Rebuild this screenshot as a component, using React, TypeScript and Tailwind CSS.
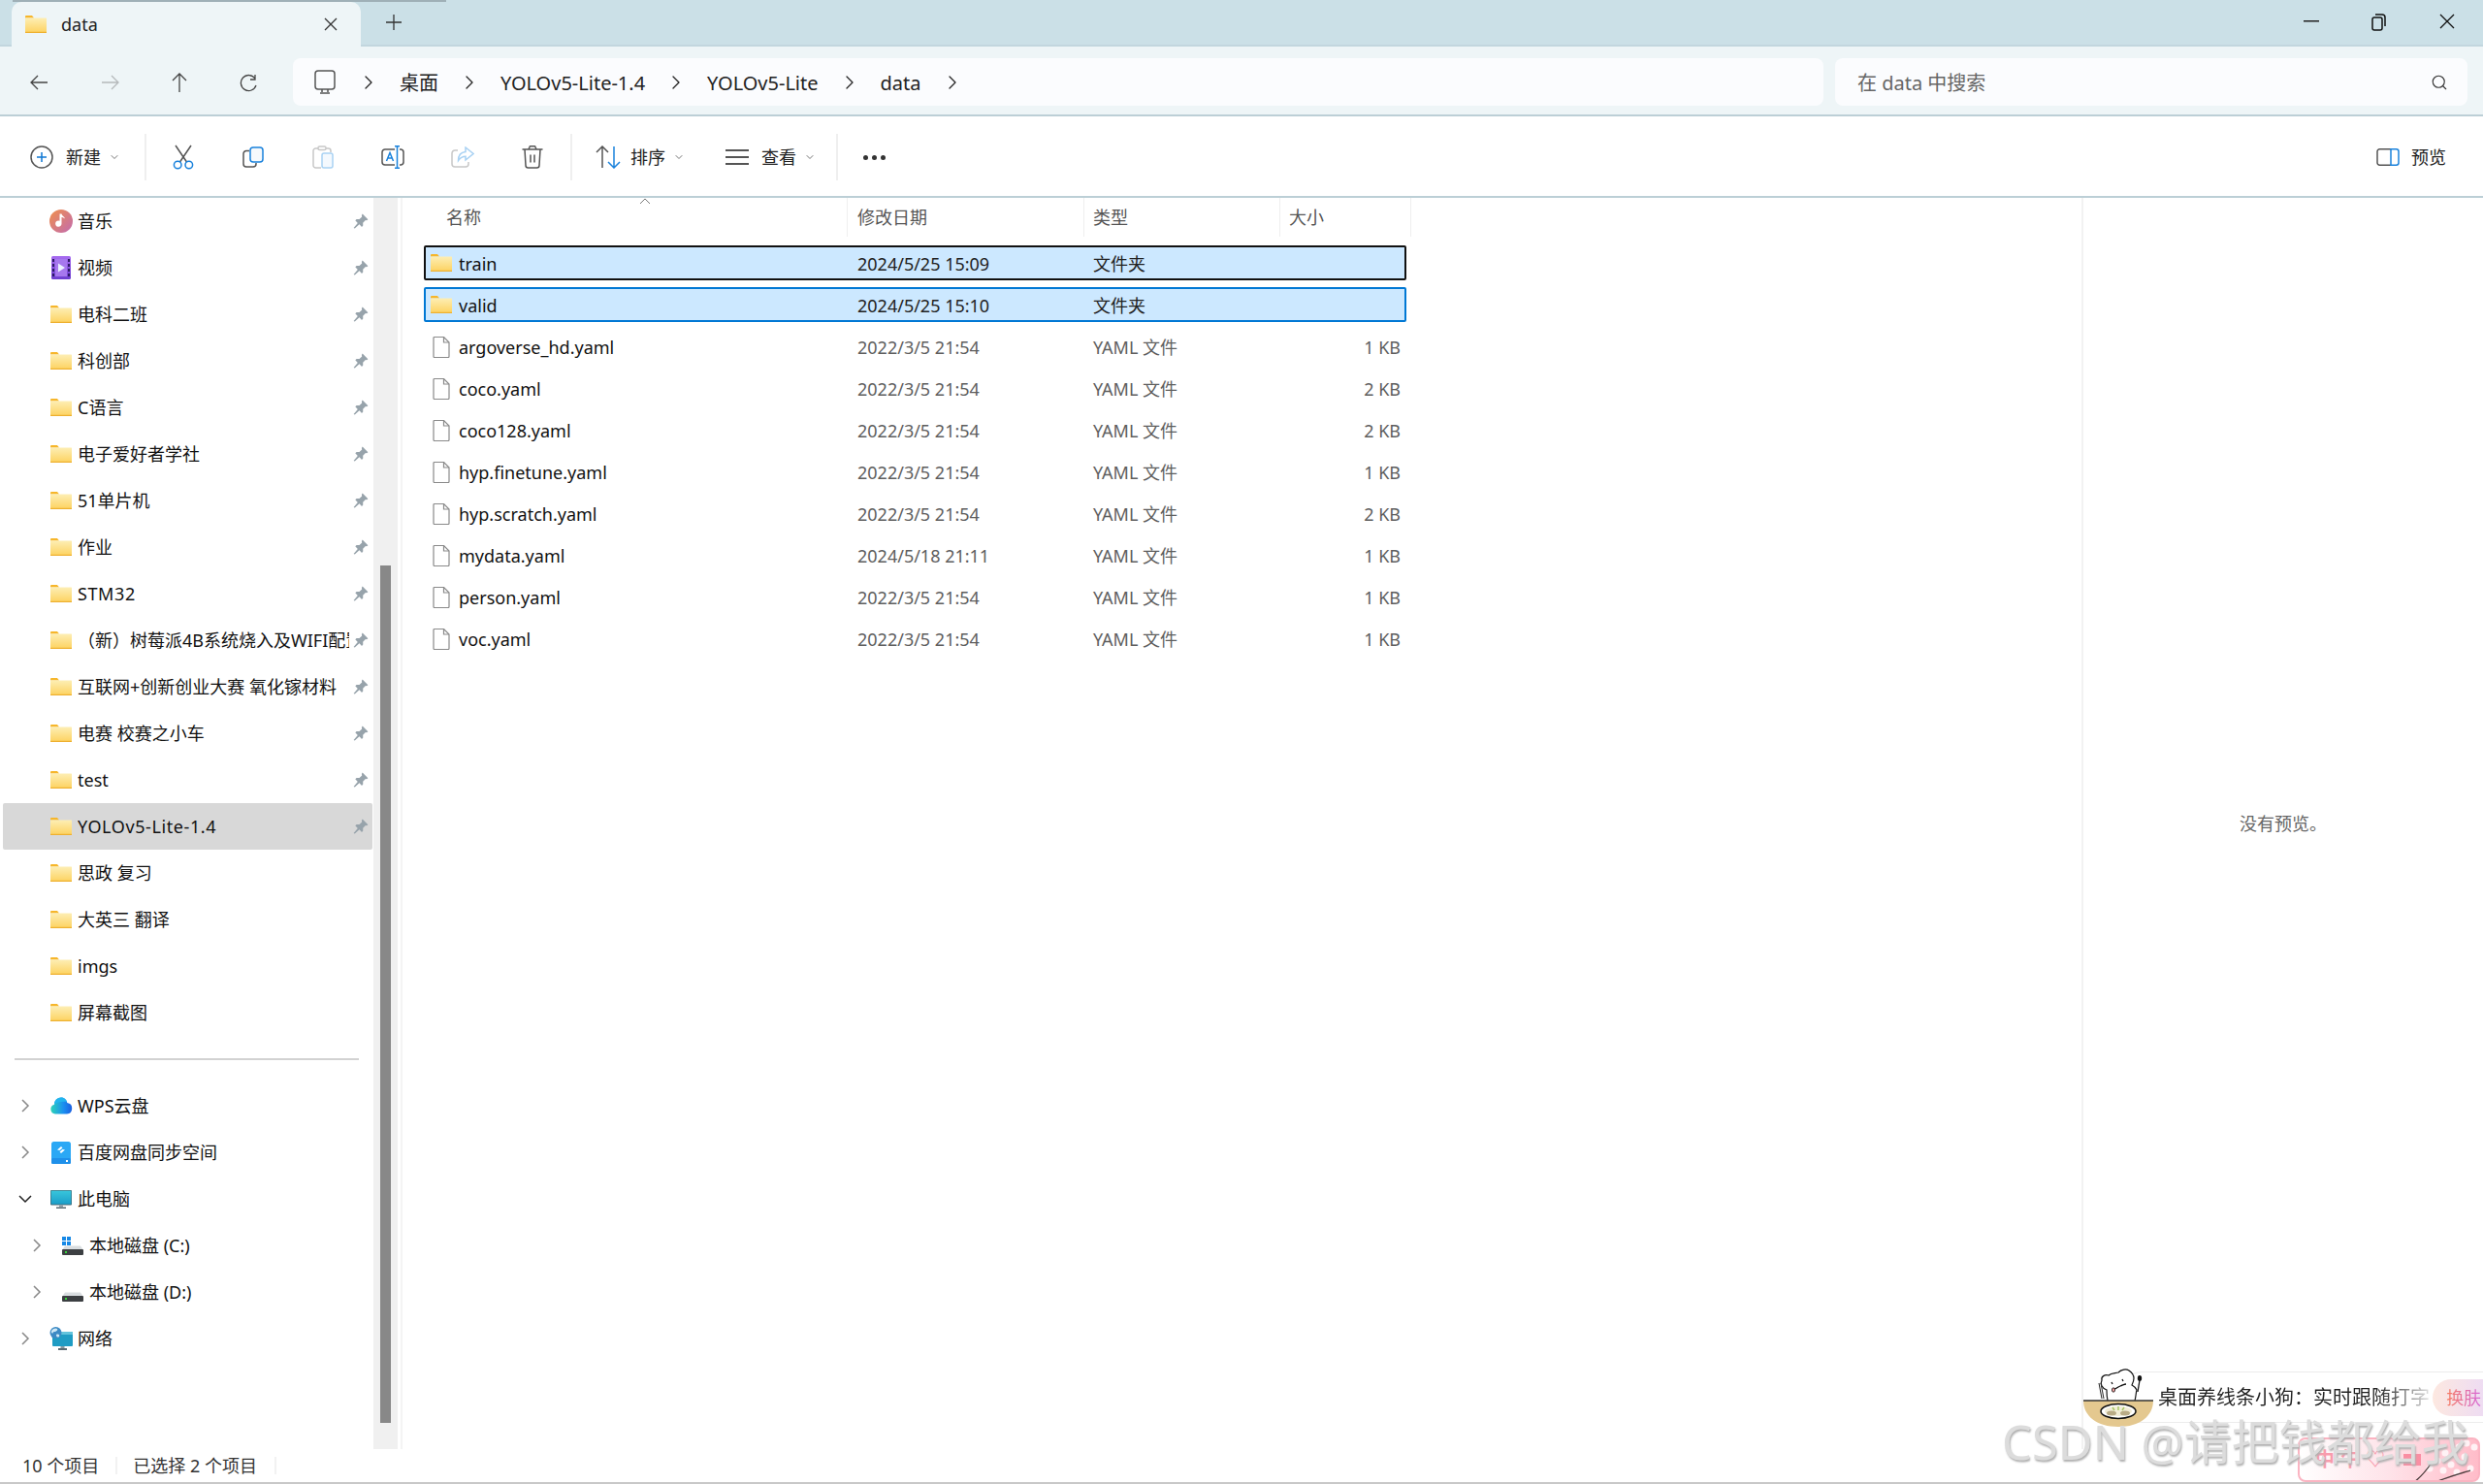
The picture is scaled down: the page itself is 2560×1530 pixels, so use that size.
import { ChevronDown, ChevronRight, Search } from 'lucide-react';

const FONT = 'font-["Noto_Sans","Noto_Sans_CJK_SC",sans-serif]';

function FolderIcon() {
  return (
    <svg width="22" height="18" viewBox="0 0 22 18" className="shrink-0">
      <defs>
        <linearGradient id="fold" x1="0" y1="0" x2="0" y2="1">
          <stop offset="0" stopColor="#fdeeb4" />
          <stop offset="1" stopColor="#fdd25f" />
        </linearGradient>
      </defs>
      <path d="M0 1a1 1 0 0 1 1-1h6l2 2.500H0z" fill="#f6b62b" />
      <rect x="0" y="2.500" width="22" height="15.500" rx="0.500" fill="url(#fold)" />
      <rect x="0" y="16.800" width="22" height="1.200" fill="#eeb02f" />
    </svg>
  );
}

function FileIcon() {
  return (
    <svg width="18" height="22" viewBox="0 0 18 22" className="shrink-0 ml-[2px] mt-[2px]" fill="#fff" stroke="#8a8a8a" strokeWidth="1.200">
      <path d="M1 1.500a1 1 0 0 1 1-1h9.500L17 6v14.500a1 1 0 0 1-1 1H2a1 1 0 0 1-1-1z" />
      <path d="M11.500 .5V6H17" fill="none" />
    </svg>
  );
}

function PinIcon() {
  return (
    <svg width="16" height="16" viewBox="0 0 16 16" fill="#97a3ab" className="shrink-0">
      <path d="M9.700.6l5.700 5.700-1.300 1-1.200-.3-2.700 2.700.1 2.900-1.300 1.300-2.500-2.700-4.700 4.200-1.200-.4 4.200-5L2.300 7.300l1.300-1.300 2.900.1L9.200 3.400 8.900 2z" />
    </svg>
  );
}

function MusicIcon() {
  return (
    <svg width="24" height="24" viewBox="0 0 24 24" className="shrink-0">
      <defs>
        <linearGradient id="mus" x1="0" y1="0" x2="1" y2="1">
          <stop offset="0" stopColor="#f0904c" />
          <stop offset="1" stopColor="#c26bb0" />
        </linearGradient>
      </defs>
      <circle cx="12" cy="12" r="12" fill="url(#mus)" />
      <path d="M12.500 4.500v10.200a3.200 3.200 0 1 1-2-3V4.500z M12.500 4.500c.5 2.500 3 2.500 3.500 5-1.500-1-2.500-1.500-3.500-1.500z" fill="#fff" />
    </svg>
  );
}

function VideoIcon() {
  return (
    <svg width="20" height="24" viewBox="0 0 20 24" className="shrink-0 mx-[1px]">
      <defs>
        <linearGradient id="vid" x1="0" y1="0" x2="0" y2="1">
          <stop offset="0" stopColor="#a86df0" />
          <stop offset="1" stopColor="#6d3ed0" />
        </linearGradient>
      </defs>
      <rect width="20" height="24" rx="1.500" fill="url(#vid)" />
      <rect x="4" y="3" width="12" height="18" fill="#a678ee" />
      <path d="M7 7.500l7 4.500-7 4.500z" fill="#eaf0ff" />
      {[3, 8, 13, 18].map(y => (
        <g key={y} fill="#2d1c66">
          <rect x="1" y={y} width="2" height="3" />
          <rect x="17" y={y} width="2" height="3" />
        </g>
      ))}
    </svg>
  );
}

function CloudIcon() {
  return (
    <svg width="24" height="18" viewBox="0 0 24 18" className="shrink-0">
      <defs>
        <linearGradient id="cld" x1="0" y1="0" x2="1" y2="0">
          <stop offset="0" stopColor="#2dd4b8" />
          <stop offset="0.600" stopColor="#1a8ff0" />
          <stop offset="1" stopColor="#1c5fe0" />
        </linearGradient>
      </defs>
      <path d="M6 17.500a5 5 0 0 1-1-9.800A7 7 0 0 1 12 .5c3.500 0 5.800 2.500 6.300 5.500A5.800 5.800 0 0 1 18 17.500z" fill="url(#cld)" />
      <path d="M5 7.700A7 7 0 0 1 12 .5c3 0 5.300 2 6.100 4.500-5-.5-10 0-13.100 2.700z" fill="#22b4ee" />
    </svg>
  );
}

function BaiduIcon() {
  return (
    <svg width="20" height="23" viewBox="0 0 20 23" className="shrink-0 mx-[1px]">
      <rect width="20" height="23" rx="2.500" fill="#2aa8f5" />
      <rect y="17" width="20" height="6" rx="1.500" fill="#1e90ea" />
      <path d="M6 8.500l4-3.500 1.500 1.500L8.500 9zM14 8.500l-4 3.500-1.500-1.500L11.500 8z" fill="#fff" />
      <rect x="15" y="19" width="2" height="2" fill="#fff" />
    </svg>
  );
}

function MonitorIcon() {
  return (
    <svg width="22" height="19" viewBox="0 0 22 19" className="shrink-0">
      <defs>
        <linearGradient id="mon" x1="0" y1="0" x2="0" y2="1">
          <stop offset="0" stopColor="#38c6dc" />
          <stop offset="1" stopColor="#1b9ec9" />
        </linearGradient>
      </defs>
      <rect width="22" height="15.500" rx="1" fill="#46606a" />
      <rect x=".6" y=".6" width="20.800" height="14" fill="url(#mon)" />
      <rect x="9" y="15.500" width="4" height="2" fill="#8b9ba3" />
      <rect x="6" y="17.500" width="10" height="1.500" fill="#5a6a72" />
    </svg>
  );
}

function DriveIcon({ win }: { win?: boolean }) {
  return (
    <svg width="22" height="19" viewBox="0 0 22 19" className="shrink-0">
      <path d="M3 9.500h16l3 4.500H0z" fill="#d9dde0" />
      <rect y="13" width="22" height="6" rx="1" fill="#3c3f42" />
      <rect x="3" y="15" width="2" height="2" fill="#37d43c" />
      {win && (
        <g fill="#1688e6">
          <rect width="4" height="4" />
          <rect x="5" width="4" height="4" />
          <rect y="5" width="4" height="4" />
          <rect x="5" y="5" width="4" height="4" />
        </g>
      )}
    </svg>
  );
}

function NetworkIcon() {
  return (
    <svg width="24" height="24" viewBox="0 0 24 24" className="shrink-0">
      <rect x="3" y="5" width="21" height="15" rx="1" fill="#1f9cc4" />
      <rect x="3" y="5" width="21" height="3" fill="#62c3dc" />
      <rect x="11.500" y="20" width="4" height="2" fill="#8b9ba3" />
      <rect x="9" y="22" width="9" height="2" fill="#5a6a72" />
      <circle cx="6.500" cy="6" r="6" fill="#3d8ac4" />
      <path d="M2 4c2-3 5-3 6-2s-1 3-3 3-1 3-3 1z M7 8c2-1 4 0 3 2-1 1-3 1-3-2z" fill="#cfe8f5" />
    </svg>
  );
}

function TreeChevron({ open }: { open?: boolean }) {
  return (
    <svg width="14" height="14" viewBox="0 0 14 14" fill="none" strokeWidth="1.500" className="shrink-0">
      {open ? <path d="M1 4l6 6 6-6" stroke="#222" /> : <path d="M4 1l6 6-6 6" stroke="#888" />}
    </svg>
  );
}

const pinned: { name: string; icon?: 'music' | 'video'; pin?: boolean }[] = [
  { name: '音乐', icon: 'music', pin: true },
  { name: '视频', icon: 'video', pin: true },
  { name: '电科二班', pin: true },
  { name: '科创部', pin: true },
  { name: 'C语言', pin: true },
  { name: '电子爱好者学社', pin: true },
  { name: '51单片机', pin: true },
  { name: '作业', pin: true },
  { name: 'STM32', pin: true },
  { name: '（新）树莓派4B系统烧入及WIFI配置', pin: true },
  { name: '互联网+创新创业大赛 氧化镓材料', pin: true },
  { name: '电赛 校赛之小车', pin: true },
  { name: 'test', pin: true },
  { name: 'YOLOv5-Lite-1.4', pin: true },
  { name: '思政 复习' },
  { name: '大英三 翻译' },
  { name: 'imgs' },
  { name: '屏幕截图' },
];

const files = [
  { name: 'train', date: '2024/5/25 15:09', kind: '文件夹', size: '', sel: 'focus' },
  { name: 'valid', date: '2024/5/25 15:10', kind: '文件夹', size: '', sel: 'on' },
  { name: 'argoverse_hd.yaml', date: '2022/3/5 21:54', kind: 'YAML 文件', size: '1 KB' },
  { name: 'coco.yaml', date: '2022/3/5 21:54', kind: 'YAML 文件', size: '2 KB' },
  { name: 'coco128.yaml', date: '2022/3/5 21:54', kind: 'YAML 文件', size: '2 KB' },
  { name: 'hyp.finetune.yaml', date: '2022/3/5 21:54', kind: 'YAML 文件', size: '1 KB' },
  { name: 'hyp.scratch.yaml', date: '2022/3/5 21:54', kind: 'YAML 文件', size: '2 KB' },
  { name: 'mydata.yaml', date: '2024/5/18 21:11', kind: 'YAML 文件', size: '1 KB' },
  { name: 'person.yaml', date: '2022/3/5 21:54', kind: 'YAML 文件', size: '1 KB' },
  { name: 'voc.yaml', date: '2022/3/5 21:54', kind: 'YAML 文件', size: '1 KB' },
];

const tree = [
  { name: 'WPS云盘', icon: <CloudIcon />, indent: false },
  { name: '百度网盘同步空间', icon: <BaiduIcon />, indent: false },
  { name: '此电脑', icon: <MonitorIcon />, indent: false, open: true },
  { name: '本地磁盘 (C:)', icon: <DriveIcon win />, indent: true },
  { name: '本地磁盘 (D:)', icon: <DriveIcon />, indent: true },
  { name: '网络', icon: <NetworkIcon />, indent: false },
];

function Sep() {
  return <div className="w-[2px] h-[48px] bg-[#efefef] shrink-0" />;
}

function ToolIcon({ children }: { children: React.ReactNode }) {
  return <div className="w-[72px] h-[48px] flex items-center justify-center shrink-0">{children}</div>;
}

function Crumb({ text }: { text: string }) {
  return (
    <>
      <span className="pt-[3px]">{text}</span>
      <ChevronRight size={24} strokeWidth={1.3} className="text-[#222] -mx-[6px]" />
    </>
  );
}

function Toolbar() {
  return (
    <div className="h-[84px] shrink-0 bg-white border-b-2 border-[#bccfd6] flex items-center pt-[2px] text-[18px] text-[#222]">
      <div className="w-[149px] pl-[31px] flex items-center shrink-0">
        <svg width="24" height="24" viewBox="0 0 24 24" fill="none" strokeWidth="1.500" className="shrink-0">
          <circle cx="12" cy="12" r="11" stroke="#555" />
          <path d="M12 7v10M7 12h10" stroke="#0f78d4" />
        </svg>
        <span className="ml-[13px]">新建</span>
        <ChevronDown size={12} className="ml-[8px] text-[#777]" />
      </div>
      <Sep />
      <div className="flex pl-[2px]">
        <ToolIcon>
          <svg width="22" height="26" viewBox="0 0 22 26" fill="none" strokeWidth="1.500">
            <path d="M3 1l11.500 17M19 1L7.500 18" stroke="#555" />
            <circle cx="5.200" cy="21" r="3.800" stroke="#1a82dc" />
            <circle cx="16.800" cy="21" r="3.800" stroke="#1a82dc" />
          </svg>
        </ToolIcon>
        <ToolIcon>
          <svg width="22" height="22" viewBox="0 0 22 22" fill="none" strokeWidth="1.500">
            <path d="M7 4.500H4A3 3 0 0 0 1 7.500v10.500a3 3 0 0 0 3 3h7a3 3 0 0 0 3-3v-1" stroke="#555" />
            <rect x="8" y="1" width="13" height="15" rx="3" fill="#f6f9fc" stroke="#1a82dc" />
          </svg>
        </ToolIcon>
        <ToolIcon>
          <svg width="22" height="24" viewBox="0 0 22 24" fill="none" strokeWidth="1.500">
            <path d="M6 3H3.500A2.500 2.500 0 0 0 1 5.500v15A2.500 2.500 0 0 0 3.500 23H9M14 3h2.500A2.500 2.500 0 0 1 19 5.500V7" stroke="#c8c8c8" />
            <rect x="6" y="1" width="8" height="3.500" rx="1.500" stroke="#c8c8c8" />
            <rect x="10" y="8" width="11" height="15" rx="2" fill="#f4f9fe" stroke="#a9d2f3" />
          </svg>
        </ToolIcon>
        <ToolIcon>
          <svg width="24" height="24" viewBox="0 0 24 24" fill="none" strokeWidth="1.500">
            <path d="M14 4H4a3 3 0 0 0-3 3v10a3 3 0 0 0 3 3h10M19 4h1.500a3 3 0 0 1 2.500 3v10a3 3 0 0 1-2.500 3H19" stroke="#555" />
            <path d="M14 .8h5M16.500 .8v22.400M14 23.200h5" stroke="#1a82dc" />
            <path d="M5.500 16L9 7.500l3.500 8.500M7 13h4" stroke="#1a82dc" />
          </svg>
        </ToolIcon>
        <ToolIcon>
          <svg width="24" height="22" viewBox="0 0 24 22" fill="none" strokeWidth="1.500">
            <path d="M7 4H4a3 3 0 0 0-3 3v11a3 3 0 0 0 3 3h11a3 3 0 0 0 3-3v-2" stroke="#c8c8c8" />
            <path d="M15 1l8 6.500-8 6.500v-3.800c-3.500 0-5.500 1.300-7.500 4.300 0-5 2.500-8.500 7.500-9z" stroke="#a9d2f3" />
          </svg>
        </ToolIcon>
        <ToolIcon>
          <svg width="22" height="24" viewBox="0 0 22 24" fill="none" stroke="#555" strokeWidth="1.500">
            <path d="M.5 4h21M7 4l1-2.500a1 1 0 0 1 1-.7h4a1 1 0 0 1 1 .7L15 4M3 4l1 16.500a2.500 2.500 0 0 0 2.500 2.500h9a2.500 2.500 0 0 0 2.500-2.500L19 4M9 9.500v8M13 9.500v8" />
          </svg>
        </ToolIcon>
      </div>
      <div className="ml-[3px]"><Sep /></div>
      <div className="ml-[24px] flex items-center w-[134px] shrink-0">
        <svg width="26" height="24" viewBox="0 0 26 24" fill="none" strokeWidth="1.500" className="shrink-0">
          <path d="M7 23V1M1 7l6-6 6 6" stroke="#555" />
          <path d="M19 1v22M13 17l6 6 6-6" stroke="#1a82dc" />
        </svg>
        <span className="ml-[10px]">排序</span>
        <ChevronDown size={12} className="ml-[8px] text-[#777]" />
      </div>
      <div className="flex items-center shrink-0">
        <svg width="24" height="20" viewBox="0 0 24 20" stroke="#555" strokeWidth="2" className="shrink-0">
          <path d="M0 3h24M0 10h24M0 17h24" />
        </svg>
        <span className="ml-[13px]">查看</span>
        <ChevronDown size={12} className="ml-[8px] text-[#777]" />
      </div>
      <div className="ml-[21px]"><Sep /></div>
      <div className="ml-[26px] flex gap-[4px]">
        <span className="w-[5px] h-[5px] rounded-full bg-[#333]" />
        <span className="w-[5px] h-[5px] rounded-full bg-[#333]" />
        <span className="w-[5px] h-[5px] rounded-full bg-[#333]" />
      </div>
      <div className="ml-auto pr-[38px] flex items-center">
        <svg width="24" height="18" viewBox="0 0 24 18" fill="none" strokeWidth="1.500">
          <path d="M15 .8H3.500A2.500 2.500 0 0 0 1 3.300v11.400a2.500 2.500 0 0 0 2.500 2.500H15" stroke="#555" />
          <path d="M15 .8h5.500A2.500 2.500 0 0 1 23 3.300v11.400a2.500 2.500 0 0 1-2.500 2.500H15z" stroke="#1a82dc" />
        </svg>
        <span className="ml-[12px]">预览</span>
      </div>
    </div>
  );
}

function Sidebar() {
  return (
    <aside className="w-[385px] shrink-0 text-[18px] text-[#111]">
      {pinned.map(p => (
        <div
          key={p.name}
          className={`h-[48px] ml-[3px] mr-[1px] pl-[49px] flex items-center rounded-[2px] ${p.name === 'YOLOv5-Lite-1.4' ? 'bg-[#d8d8d8]' : ''}`}
        >
          <div className="w-[22px] flex justify-center shrink-0">
            {p.icon === 'music' ? <MusicIcon /> : p.icon === 'video' ? <VideoIcon /> : <FolderIcon />}
          </div>
          <span className={`ml-[6px] w-[280px] overflow-hidden whitespace-nowrap ${p.name === 'YOLOv5-Lite-1.4' || p.name === 'STM32' ? 'tracking-[.6px]' : ''}`}>{p.name}</span>
          {p.pin && <div className="ml-[4px]"><PinIcon /></div>}
        </div>
      ))}
      <div className="mx-[15px] mt-[23px] mb-[23px] h-[2px] bg-[#d2d2d2]" />
      {tree.map(t => (
        <div key={t.name} className="h-[48px] flex items-center">
          <div className={`w-[16px] flex justify-center shrink-0 ${t.indent ? 'ml-[30px]' : 'ml-[18px]'}`}>
            <TreeChevron open={t.open} />
          </div>
          <div className="ml-[18px] w-[22px] flex justify-center shrink-0">{t.icon}</div>
          <span className="ml-[6px] whitespace-nowrap">{t.name}</span>
        </div>
      ))}
    </aside>
  );
}

function FileList() {
  return (
    <div className="w-[1733px] shrink-0 border-l-2 border-[#f4f4f4] text-[18px]">
      <div className="relative h-[40px] flex text-[#555]">
        <div className="w-[459px] pl-[45px] leading-[40px] border-r border-[#efefef]">名称</div>
        <div className="w-[244px] pl-[10px] leading-[40px] border-r border-[#efefef]">修改日期</div>
        <div className="w-[202px] pl-[9px] leading-[40px] border-r border-[#efefef]">类型</div>
        <div className="w-[135px] pl-[9px] leading-[40px] border-r border-[#efefef]">大小</div>
        <svg width="12" height="7" viewBox="0 0 12 7" fill="none" stroke="#777" className="absolute left-[244px] top-0">
          <path d="M1 6l5-5 5 5" />
        </svg>
      </div>
      <div className="ml-[22px] mt-[9px] w-[1013px] flex flex-col gap-[7px]">
        {files.map(f => (
          <div
            key={f.name}
            className={`h-[36px] grid grid-cols-[445px_243px_200px_117px] items-center border-2 rounded-[2px] ${
              f.sel === 'focus' ? 'bg-[#cce8ff] border-[#111]' : f.sel === 'on' ? 'bg-[#cce8ff] border-[#0078d4]' : 'border-transparent'
            }`}
          >
            <div className="flex items-center pl-[5px] text-[#111]">
              <div className="w-[22px] flex shrink-0">{f.size ? <FileIcon /> : <FolderIcon />}</div>
              <span className="ml-[7px] pt-[2px]">{f.name}</span>
            </div>
            <span className={`pt-[2px] ${f.size ? 'text-[#5e5e5e]' : 'text-[#222]'}`}>{f.date}</span>
            <span className={`pt-[2px] ${f.size ? 'text-[#5e5e5e]' : 'text-[#222]'}`}>{f.kind}</span>
            <span className="pt-[2px] text-right text-[#5e5e5e]">{f.size}</span>
          </div>
        ))}
      </div>
    </div>
  );
}

function Overlay() {
  return (
    <>
      <div className="absolute right-0 bottom-[63px] w-[377px] h-[53px] border border-r-0 border-[#ececec] rounded-l-[26px] bg-white flex items-center pl-[41px] text-[20px] text-[#222]">
        <span className="w-[280px] whitespace-nowrap overflow-hidden bg-gradient-to-r from-[#222] from-80% to-[#ddd] bg-clip-text text-transparent">桌面养线条小狗：实时跟随打字</span>
        <span className="ml-[4px] w-[52px] h-[38px] rounded-l-[19px] bg-gradient-to-r from-[#fde8e0] to-[#eedcf2] pl-[14px] leading-[38px] text-[18px]">
          <span className="bg-gradient-to-r from-[#f77a5a] to-[#d766d8] bg-clip-text text-transparent">换肤</span>
        </span>
      </div>
      <svg width="72" height="58" viewBox="0 0 72 58" className="absolute left-[2148px] top-[1413px] overflow-visible">
        <path d="M0 31h72c0 16-14 27-36 27S0 47 0 31z" fill="#e4c88f" />
        <path d="M25 31C24 26 24 22 24 20 19 18 17 14 19 10 18 6 22 4 26 5 29 2 33 3 36 2 39-1 44-2 47 0 50 2 52 5 52 8 52 11 51 13 50 15 52 16 54 18 55 20 54 24 54 28 53 31" fill="#fff" stroke="#111" strokeWidth="1.200" />
        <path d="M29 12l1 2M40 9l1 2M32 19c2 0 3-2 6-3s4-2 6-2" stroke="#111" strokeWidth="1.300" fill="none" />
        <ellipse cx="31" cy="20" rx="1.600" ry="2.200" fill="#f0a0a0" stroke="#111" strokeWidth=".8" />
        <path d="M16 13l3 16M18 13l3 16" stroke="#222" strokeWidth="1" fill="none" />
        <path d="M58 10l-2 12" stroke="#111" strokeWidth="1.300" />
        <ellipse cx="58" cy="8" rx="2.200" ry="3" fill="#111" />
        <path d="M0 31h72" stroke="#333" strokeWidth="1.500" />
        <ellipse cx="36" cy="42" rx="18" ry="7.500" fill="#fff" stroke="#111" strokeWidth="1.500" />
        <ellipse cx="36" cy="42" rx="14" ry="5" fill="#f1ecd6" />
        <ellipse cx="29" cy="44" rx="5" ry="2.500" fill="#b9ab86" />
        <ellipse cx="43" cy="44" rx="5" ry="2.500" fill="#b9ab86" />
        <path d="M30 38l2 3M36 37v4M42 38l-2 3" stroke="#a8c86a" strokeWidth="1.500" />
      </svg>
      <div className="absolute left-[2369px] top-[1482px] w-[188px] h-[46px] rounded-[8px] border-2 border-[#fbb4c2] bg-gradient-to-r from-[#fff] via-[#fee3e9] to-[#ffbcc9] overflow-hidden flex items-center pl-[16px] text-[#f89cad] text-[20px] font-bold">
        <span className="tracking-[6px] whitespace-nowrap">中午♡</span>
        <span className="ml-[13px] w-[18px] h-[12px] bg-[#fa8ea3]" />
        <svg width="70" height="44" viewBox="0 0 70 44" className="absolute right-0 top-0">
          {[[20, 30], [28, 22], [36, 14], [42, 26], [50, 8], [56, 18], [62, 30], [66, 8], [48, 34], [34, 32], [58, 4]].map(([x, y]) => (
            <circle key={`${x}-${y}`} cx={x} cy={y} r="3.500" fill="#fff2f5" />
          ))}
          <path d="M4 44C12 38 18 30 22 24M26 44C36 40 48 36 62 32" stroke="#4a3a3a" strokeWidth="1.300" fill="none" />
        </svg>
      </div>
      <div className="absolute left-[2064px] top-[1452px] w-[496px] overflow-hidden whitespace-nowrap text-[49px] leading-[68px] text-[#dcdcdc] [text-shadow:1px_2px_2px_#b0b0b0]">
        CSDN @请把钱都给我
      </div>
    </>
  );
}

export default function App() {
  return (
    <div className={`relative w-[2560px] h-[1530px] overflow-hidden bg-white flex flex-col ${FONT}`}>
      <div className="h-[48px] shrink-0 bg-[#cbe0e7] border-b-2 border-[#c2d6de] flex items-end pl-[12px] relative">
        <div className="absolute left-[13px] top-0 w-[447px] h-[2px] bg-[#9fb0b7]" />
        <div className="w-[360px] h-[46px] -mb-[2px] bg-[#eef5f7] rounded-t-[10px] flex items-center pl-[14px] pr-[24px] text-[18px] text-[#222] z-10">
          <FolderIcon />
          <span className="ml-[15px]">data</span>
          <svg width="14" height="14" viewBox="0 0 14 14" stroke="#333" strokeWidth="1.300" className="ml-auto">
            <path d="M1 1l12 12M13 1L1 13" />
          </svg>
        </div>
        <div className="h-[46px] ml-[26px] flex items-center">
          <svg width="16" height="16" viewBox="0 0 16 16" stroke="#333" strokeWidth="1.300">
            <path d="M8 0v16M0 8h16" />
          </svg>
        </div>
        <svg width="16" height="2" className="absolute left-[2375px] top-[21px]"><rect width="16" height="1.500" fill="#222" /></svg>
        <svg width="16" height="20" viewBox="0 0 16 20" fill="none" stroke="#111" strokeWidth="1.500" className="absolute left-[2445px] top-[13px]">
          <rect x="1" y="5" width="10" height="13" rx="2" />
          <path d="M4 2h7a3 3 0 0 1 3 3v9" />
        </svg>
        <svg width="16" height="16" viewBox="0 0 16 16" stroke="#111" strokeWidth="1.300" className="absolute left-[2515px] top-[14px]">
          <path d="M1 1l14 14M15 1L1 15" />
        </svg>
      </div>

      <div className="h-[72px] shrink-0 bg-[#eef5f7] border-b-2 border-[#bccfd6] flex items-center pt-[3px] text-[#555]">
        <div className="w-[302px] flex pl-[5px] shrink-0">
          {[
            <path key="b" d="M20 12H3M10 5l-7 7 7 7" stroke="#444" />,
            <path key="f" d="M4 12h17M14 5l7 7-7 7" stroke="#b5b9bb" />,
            <path key="u" d="M12 22V3M5 10l7-7 7 7" stroke="#444" />,
            <path key="r" d="M18 4v5h-5M19 15a8 8 0 1 1-1-7" stroke="#444" />,
          ].map((p, i) => (
            <div key={i} className="w-[72px] flex justify-center">
              <svg width="24" height="24" viewBox="0 0 24 24" fill="none" strokeWidth="1.300">{p}</svg>
            </div>
          ))}
        </div>
        <div className="w-[1578px] h-[49px] rounded-[8px] bg-[#fbfcfe] flex items-center pl-[22px] gap-[26px] text-[20px] text-[#222] shrink-0">
          <svg width="22" height="26" viewBox="0 0 22 26" fill="none" stroke="#555" strokeWidth="1.500" className="mr-[2px]">
            <rect x="1" y="1" width="20" height="19" rx="3" />
            <path d="M8 20v3M14 20v3M6 24h10" />
          </svg>
          <ChevronRight size={24} strokeWidth={1.3} className="text-[#222] -mx-[6px]" />
          <Crumb text="桌面" />
          <Crumb text="YOLOv5-Lite-1.4" />
          <Crumb text="YOLOv5-Lite" />
          <Crumb text="data" />
        </div>
        <div className="ml-[12px] w-[652px] h-[49px] rounded-[8px] bg-[#fbfcfe] flex items-center pl-[23px] pr-[20px] text-[20px] text-[#666] shrink-0">
          <span className="pt-[3px]">在 data 中搜索</span>
          <Search size={18} strokeWidth={1.5} className="ml-auto text-[#333]" />
        </div>
      </div>

      <Toolbar />

      <div className="flex h-[1290px] shrink-0">
        <Sidebar />
        <div className="w-[25px] shrink-0 bg-[#f0f0f0] pl-[7px] pt-[379px]">
          <div className="w-[11px] h-[884px] bg-[#888]" />
        </div>
        <div className="w-[3px] shrink-0" />
        <FileList />
        <div className="flex-1 border-l-2 border-[#f2f2f2] flex items-center justify-center text-[18px] text-[#666]">没有预览。</div>
      </div>

      <div className="flex-1 flex items-center pl-[23px] text-[18px] text-[#333] border-b-2 border-[#c8c8c8]">
        <span>10 个项目</span>
        <div className="ml-[17px] w-[2px] h-[18px] bg-[#f2f2f2]" />
        <span className="ml-[16px]">已选择 2 个项目</span>
        <div className="ml-[18px] w-[2px] h-[18px] bg-[#f2f2f2]" />
      </div>

      <Overlay />
    </div>
  );
}
